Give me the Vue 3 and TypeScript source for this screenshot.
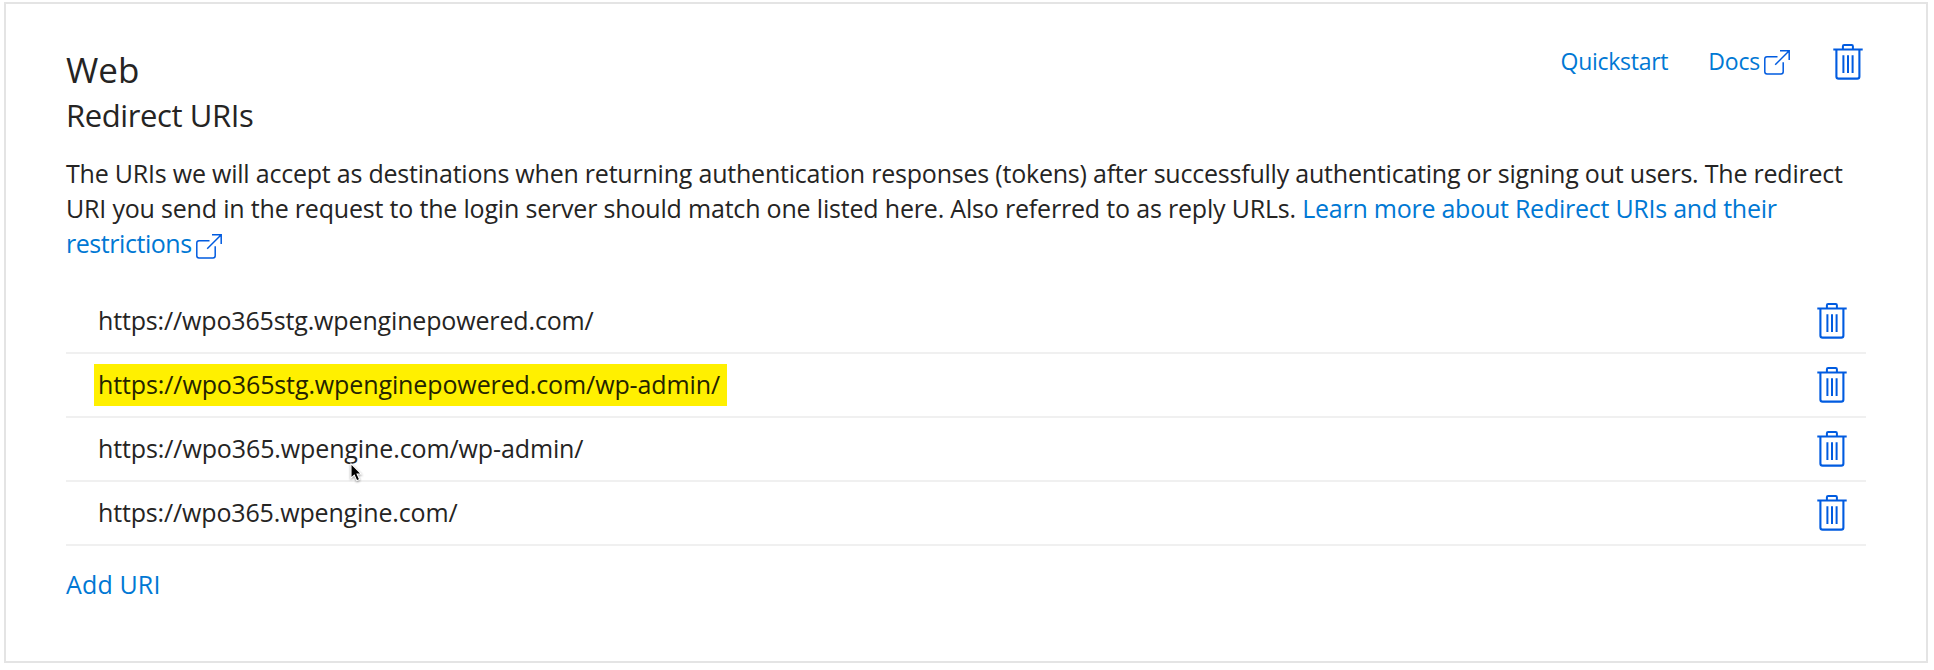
<script setup lang="ts">
import { h, type FunctionalComponent } from 'vue'

interface RedirectUri {
  url: string
  fit: string
  highlighted?: boolean
}

const uris: RedirectUri[] = [
  { url: 'https://wpo365stg.wpenginepowered.com/', fit: 'fit-b' },
  { url: 'https://wpo365stg.wpenginepowered.com/wp-admin/', fit: 'fit-a', highlighted: true },
  { url: 'https://wpo365.wpengine.com/wp-admin/', fit: 'fit-a' },
  { url: 'https://wpo365.wpengine.com/', fit: 'fit-b' },
]

const TrashIcon: FunctionalComponent = () =>
  h('svg', { width: 30, height: 36, viewBox: '0 0 30 36', fill: 'none', stroke: '#005be0' }, [
    h('path', { 'stroke-width': 2, d: 'M.3 5.5H29.7M9.9 5.5V2.2Q9.9 1 11.1 1H18.7Q19.9 1 19.9 2.2V5.5' }),
    h('path', { 'stroke-width': 2.1, d: 'M3.4 5.5V32.4Q3.4 34.6 5.6 34.6H24.2Q26.4 34.6 26.4 32.4V5.5' }),
    h('path', { 'stroke-width': 2, d: 'M10.4 11.2V29M15 11.2V29M19.6 11.2V29' }),
  ])

const ExternalIcon: FunctionalComponent = () =>
  h('svg', { width: 26, height: 25, viewBox: '0 0 26 25', fill: 'none', stroke: '#005be0', 'stroke-width': 1.5 }, [
    h('path', { d: 'M13.5 6.8H3Q.8 6.8 .8 9V21.8Q.8 24 3 24H17Q19.2 24 19.2 21.8V12.3' }),
    h('path', { d: 'M16 .8H25.2V10M25.2 .8L11.2 14.8' }),
  ])
</script>

<template>
  <section class="card">
    <header class="top">
      <div>
        <h1>Web</h1>
        <h2>Redirect URIs</h2>
      </div>
      <nav class="actions">
        <a class="quick">Quickstart</a>
        <a class="docs"><span>Docs</span><ExternalIcon /></a>
        <TrashIcon />
      </nav>
    </header>
    <p class="desc">
      <span class="l1">The URIs we will accept as destinations when returning authentication responses (tokens) after successfully authenticating or signing out users. The redirect</span><br>
      <span class="l2">URI you send in the request to the login server should match one listed here. Also referred to as reply URLs. </span><a class="l3">Learn more about Redirect URIs and their<br><span class="l4">restrictions</span><ExternalIcon class="inline-icon" /></a>
    </p>
    <ul class="list">
      <li v-for="uri in uris" :key="uri.url">
        <span class="uri" :class="[uri.fit, { marked: uri.highlighted }]">{{ uri.url }}</span>
        <TrashIcon />
      </li>
    </ul>
    <a class="add">Add URI</a>
    <svg class="cursor" width="16" height="22" viewBox="0 0 18 24">
      <path d="M4.5 1.5V17.8L8.2 14.4L11 20.6L14.2 19.2L11.4 13.2H16.2Z" />
    </svg>
  </section>
</template>

<style>
body {
  background: #fff;
}
</style>

<style scoped>
.card {
  position: relative;
  box-sizing: border-box;
  width: 1924px;
  height: 661px;
  margin: 2px 0 0 4px;
  padding: 42px 60px 0;
  border: 2px solid #e4e4e4;
  background: #fff;
  color: #252423;
  font-family: "Open Sans", "Noto Sans", sans-serif;
  font-size: 25px;
  overflow: hidden;
}
.top {
  display: flex;
  justify-content: space-between;
  align-items: flex-start;
}
h1,
h2 {
  margin: 0;
  font-weight: 400;
}
h1 {
  font-size: 35px;
  line-height: 48px;
}
h2 {
  font-size: 31px;
  line-height: 42px;
  letter-spacing: -0.4px;
}
a {
  color: #0078d4;
}
svg {
  display: block;
  flex: none;
}
.actions {
  display: flex;
  align-items: center;
  height: 36px;
  margin: -2px 3px 0 0;
  font-size: 23px;
}
.quick {
  margin-right: 40px;
  padding-bottom: 2px;
  letter-spacing: -0.27px;
}
.docs {
  display: flex;
  align-items: center;
  gap: 4px;
  margin-right: 43px;
  letter-spacing: -0.2px;
}
.docs span {
  padding-bottom: 2px;
}
.desc {
  height: 106px;
  margin: 20px 0 28px;
  line-height: 35.2px;
  white-space: nowrap;
}
.l1 { letter-spacing: -0.215px; }
.l2 { letter-spacing: -0.185px; }
.l3 { letter-spacing: -0.25px; }
.l4 { letter-spacing: -0.45px; }
.inline-icon {
  display: inline-block;
  margin-left: 4px;
  vertical-align: -6px;
}
.list {
  margin: 0;
  padding: 0;
  list-style: none;
}
.list li {
  display: flex;
  align-items: center;
  justify-content: space-between;
  box-sizing: border-box;
  height: 64px;
  padding: 0 19px 0 28px;
  border-bottom: 2px solid #f0f0f0;
}
.uri {
  padding: 0 7px 2px 4px;
  line-height: 40px;
}
.fit-a { letter-spacing: -0.11px; }
.fit-b { letter-spacing: -0.15px; }
.marked {
  background: #fff000;
  color: #252400;
}
.add {
  display: block;
  margin-top: 21px;
  line-height: 34px;
  letter-spacing: 0.15px;
}
.cursor {
  position: absolute;
  left: 341px;
  top: 458px;
  fill: #000;
  stroke: #fff;
  stroke-width: 1.2;
  filter: drop-shadow(0 1px 1px rgba(0, 0, 0, 0.4));
}
</style>
